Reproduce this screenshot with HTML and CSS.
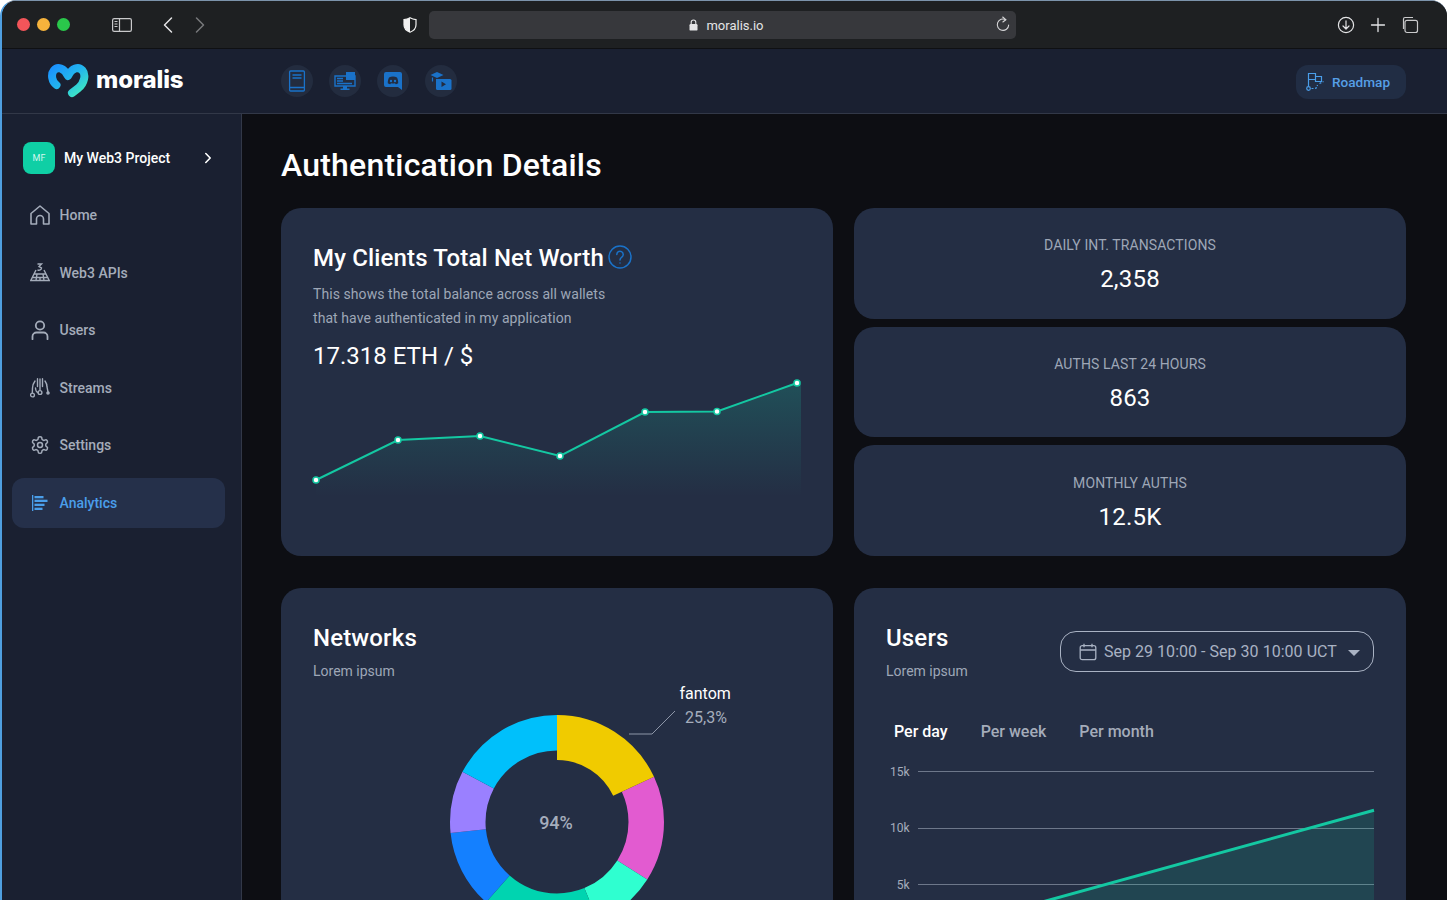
FILE: index.html
```html
<!DOCTYPE html>
<html lang="en">

<head>
    <meta charset="UTF-8">
    <title>Moralis - Authentication Details</title>
    <link rel="stylesheet" href="styles.css">
</head>

<body>
    <div class="window">
        <!-- Safari toolbar -->
        <div class="browser-bar">
            <div class="traffic">
                <span class="light red"></span>
                <span class="light yellow"></span>
                <span class="light green"></span>
            </div>
            <svg class="tool-sidebar" width="22" height="16" viewBox="0 0 22 16" fill="none" stroke="#c9c9cb" stroke-width="1.2">
                <rect x="1.6" y="1.6" width="18.8" height="12.8" rx="1.6" />
                <path d="M8.5 1.6v12.8" />
                <path d="M3.5 4.5h3M3.5 7h3M3.5 9.5h3" stroke-width="1" />
            </svg>
            <svg class="tool-back" width="12" height="18" viewBox="0 0 12 18" fill="none" stroke="#e4e4e6" stroke-width="1.5" stroke-linecap="round" stroke-linejoin="round">
                <path d="M9.5 2 2.5 9l7 7" />
            </svg>
            <svg class="tool-forward" width="12" height="18" viewBox="0 0 12 18" fill="none" stroke="#77787b" stroke-width="1.5" stroke-linecap="round" stroke-linejoin="round">
                <path d="M2.5 2l7 7-7 7" />
            </svg>
            <svg class="tool-shield" width="14" height="16" viewBox="0 0 14 16">
                <path d="M7 .8C5 2 3 2.5 1 2.6v5.2c0 3.4 2.6 6.2 6 7.4 3.4-1.2 6-4 6-7.4V2.600C11 2.500 9 2 7 .8z" fill="none" stroke="#f1f1f1" stroke-width="1.2" />
                <path d="M7 .8C5 2 3 2.5 1 2.6v5.2c0 3.4 2.6 6.2 6 7.4z" fill="#f1f1f1" />
            </svg>
            <div class="url-bar">
                <div class="url-text">
                    <svg width="9" height="12" viewBox="0 0 9 12">
                        <path d="M2.2 5.500V3.300a2.300 2.300 0 0 1 4.600 0v2.200" fill="none" stroke="#e4e4e6" stroke-width="1.1" />
                        <rect x=".5" y="5" width="8" height="6.6" rx="1.2" fill="#e4e4e6" />
                    </svg>
                    moralis.io
                </div>
                <svg class="reload" width="16" height="17" viewBox="0 0 16 17" fill="none" stroke="#d6d6d8" stroke-width="1.1" stroke-linecap="round" stroke-linejoin="round">
                    <path d="M10.8 3.7A5.7 5.7 0 1 0 13.7 9" />
                    <path d="M7.7 1 10.800 3.700 7.900 6" />
                </svg>
            </div>
            <div class="browser-actions">
                <svg width="18" height="18" viewBox="0 0 18 18" fill="none" stroke="#e4e4e6" stroke-width="1.2" stroke-linecap="round" stroke-linejoin="round">
                    <circle cx="9" cy="9" r="7.6" />
                    <path d="M9 4.800v8M6 10l3 3 3-3" />
                </svg>
                <svg width="18" height="18" viewBox="0 0 18 18" fill="none" stroke="#e4e4e6" stroke-width="1.3" stroke-linecap="round">
                    <path d="M9 2.500v13M2.500 9h13" />
                </svg>
                <svg width="18" height="18" viewBox="0 0 18 18" fill="none" stroke="#c9c9cb" stroke-width="1.2">
                    <path d="M2.500 13V3A1.500 1.500 0 0 1 4 1.500h8" />
                    <rect x="4" y="4.300" width="12.500" height="12.200" rx="2" />
                </svg>
            </div>
        </div>

        <!-- App header -->
        <div class="app-header">
            <div class="brand">
                <svg width="42" height="36" viewBox="0 0 42 36" fill="none">
                    <defs>
                        <linearGradient id="logoGrad" x1="0" y1="0" x2="1" y2="1">
                            <stop offset="0" stop-color="#1b93ff" />
                            <stop offset=".45" stop-color="#22b4ee" />
                            <stop offset="1" stop-color="#41ecc0" />
                        </linearGradient>
                    </defs>
                    <path d="M9.500 23C5 20 3.600 12.500 6.800 8.500 10.500 4 17 6 21 14 25 6 31.500 4 35.500 8.500 39 12.500 37.500 21 31.500 26L25 31" stroke="url(#logoGrad)" stroke-width="8" stroke-linecap="round" stroke-linejoin="round" />
                </svg>
                <span class="brand-name">moralis</span>
            </div>
            <div class="header-links">
                <span class="round-link">
                    <svg width="18" height="22" viewBox="0 0 18 22" fill="none" stroke="#1a72c9" stroke-width="1.3">
                        <rect x="1.600" y="1" width="14.800" height="20" rx="1" />
                        <path d="M1.600 17.500h14.800M4.500 5h9M4.500 8h9" />
                    </svg>
                </span>
                <span class="round-link">
                    <svg width="22" height="20" viewBox="0 0 22 20">
                        <path d="M1 5h20v10H1z" fill="none" stroke="#1a72c9" stroke-width="1.4" />
                        <path d="M12 1h9v8h-9z" fill="#1a72c9" />
                        <path d="M3 7.500h6M3 10h6M3 12.500h15" stroke="#1a72c9" stroke-width="1.3" />
                        <path d="M9 15h4v2.500h2.500V19h-9v-1.500H9z" fill="#1a72c9" />
                    </svg>
                </span>
                <span class="round-link">
                    <svg width="20" height="20" viewBox="0 0 20 20">
                        <path d="M3 1h14a2 2 0 0 1 2 2v16l-4-3H3a2 2 0 0 1-2-2V3a2 2 0 0 1 2-2z" fill="#1a72c9" />
                        <path d="M6 6.500c2.500-1.200 5.500-1.200 8 0 1 2 1.300 3.800 1.200 5.700-1 .7-1.800 1-2.500 1l-.7-1c-1.300.4-2.700.4-4 0l-.7 1c-.7 0-1.500-.3-2.500-1C4.700 10.300 5 8.500 6 6.500z" fill="#232c3f" />
                        <circle cx="8" cy="10" r="1.2" fill="#1a72c9" />
                        <circle cx="12" cy="10" r="1.2" fill="#1a72c9" />
                    </svg>
                </span>
                <span class="round-link">
                    <svg width="22" height="20" viewBox="0 0 22 20">
                        <path d="M7 1 13.500 4 7 7 .5 4z" fill="#1a72c9" />
                        <path d="M2.500 6.500v4" stroke="#1a72c9" stroke-width="1.2" />
                        <path d="M6 8h14a1.500 1.500 0 0 1 1.500 1.500v8A1.500 1.500 0 0 1 20 19H7.500A1.500 1.500 0 0 1 6 17.500z" fill="#1a72c9" />
                        <path d="M11.500 10.500v5.500l4.500-2.700z" fill="#232c3f" />
                    </svg>
                </span>
            </div>
            <div class="roadmap">
                <svg width="20" height="20" viewBox="0 0 20 20" fill="none" stroke="#4a9eea" stroke-width="1.2">
                    <path d="M2.500 14V1.500h7v3h6v5h-6v-2h-7M9.500 4.500v3" />
                    <circle cx="2.500" cy="16.500" r="1.800" />
                    <path d="M5.500 16.500h3c2 0 2.500-1.500 3-3.500M13.500 11.500l4-2" stroke-dasharray="2 1.500" />
                </svg>
                Roadmap
            </div>
        </div>

        <div class="app-body">
            <!-- Sidebar -->
            <div class="sidebar">
                <div class="project">
                    <span class="avatar">MF</span>
                    <span class="project-name">My Web3 Project</span>
                    <svg width="8" height="12" viewBox="0 0 8 12" fill="none" stroke="#fff" stroke-width="1.6" stroke-linecap="round" stroke-linejoin="round">
                        <path d="M1.800 1.500 6.200 6l-4.400 4.500" />
                    </svg>
                </div>
                <div class="nav">
                    <div class="nav-item">
                        <svg width="20" height="20" viewBox="0 0 20 20" fill="none" stroke="currentColor" stroke-width="1.6" stroke-linejoin="round">
                            <path d="M1 8.500 10 1l9 7.500V19h-5.500v-5a3.500 3.500 0 0 0-7 0v5H1z" />
                        </svg>
                        Home
                    </div>
                    <div class="nav-item">
                        <svg width="20" height="20" viewBox="0 0 20 20" fill="none" stroke="currentColor" stroke-width="1.4">
                            <path d="M7.500 1h4L9 3.500l2.500 1.500c0 2-2 2.500-4 2" />
                            <path d="M6 7 .8 17.500h18.400L14 7M4.500 11h11M2.500 14.500h15M7 11l-1 6.500M13 11l1 6.500M10 14.500v3" />
                        </svg>
                        Web3 APIs
                    </div>
                    <div class="nav-item">
                        <svg width="20" height="20" viewBox="0 0 20 20" fill="none" stroke="currentColor" stroke-width="1.8" stroke-linecap="round">
                            <circle cx="10" cy="5.500" r="4.200" />
                            <path d="M2.500 19.200v-2.700c0-2.500 2-4 4-4h7c2 0 4 1.500 4 4v2.700" />
                        </svg>
                        Users
                    </div>
                    <div class="nav-item">
                        <svg width="20" height="20" viewBox="0 0 20 20" fill="none" stroke="currentColor" stroke-width="1.4" stroke-linecap="round">
                            <path d="M7.500.8v7.700M12.500.8v7.700M10 1v11M5 3C3.500 5 2.500 7 2.500 10l-.2 5M15 3c1.500 2 2 4 2 6l1 5" />
                            <circle cx="2.500" cy="17" r="1.900" />
                            <circle cx="10" cy="14.500" r="1.900" />
                            <circle cx="18" cy="15" r="1.100" fill="currentColor" />
                            <path d="M5.500 10c.2 2.500 1.200 4.500 2.700 4.500" />
                        </svg>
                        Streams
                    </div>
                    <div class="nav-item">
                        <svg width="20" height="20" viewBox="0 0 24 24" fill="none" stroke="currentColor" stroke-width="1.8" stroke-linejoin="round">
                            <path d="M12.220 2h-.44a2 2 0 0 0-2 2v.18a2 2 0 0 1-1 1.730l-.43.250a2 2 0 0 1-2 0l-.15-.08a2 2 0 0 0-2.730.730l-.22.380a2 2 0 0 0 .730 2.730l.15.100a2 2 0 0 1 1 1.720v.510a2 2 0 0 1-1 1.740l-.15.090a2 2 0 0 0-.730 2.730l.22.380a2 2 0 0 0 2.730.730l.15-.08a2 2 0 0 1 2 0l.43.250a2 2 0 0 1 1 1.730V20a2 2 0 0 0 2 2h.44a2 2 0 0 0 2-2v-.18a2 2 0 0 1 1-1.730l.43-.250a2 2 0 0 1 2 0l.15.08a2 2 0 0 0 2.730-.730l.22-.390a2 2 0 0 0-.730-2.730l-.15-.08a2 2 0 0 1-1-1.740v-.5a2 2 0 0 1 1-1.740l.15-.090a2 2 0 0 0 .730-2.730l-.22-.380a2 2 0 0 0-2.730-.730l-.15.08a2 2 0 0 1-2 0l-.43-.250a2 2 0 0 1-1-1.730V4a2 2 0 0 0-2-2z" />
                            <circle cx="12" cy="12" r="3" />
                        </svg>
                        Settings
                    </div>
                    <div class="nav-item active">
                        <svg width="20" height="20" viewBox="0 0 20 20" fill="currentColor">
                            <rect x="2" y="2" width="1.300" height="16" />
                            <rect x="4.500" y="3" width="9" height="2.300" />
                            <rect x="4.500" y="6.700" width="13" height="2.300" />
                            <rect x="4.500" y="10.700" width="10" height="2.300" />
                            <rect x="4.500" y="14.700" width="8" height="2.300" />
                        </svg>
                        Analytics
                    </div>
                </div>
            </div>

            <!-- Main content -->
            <div class="main">
                <h1>Authentication Details</h1>
                <div class="grid">
                    <div class="card worth">
                        <h2>My Clients Total Net Worth
                            <svg class="help" width="24" height="24" viewBox="0 0 24 24" fill="none" stroke="#1a72c9" stroke-width="1.5" stroke-linecap="round">
                                <circle cx="12" cy="12" r="11" />
                                <path d="M8.800 9.500a3.200 3.200 0 1 1 5 2.600c-1.100.8-1.800 1.400-1.800 2.900" />
                                <path d="M12 18v.1" />
                            </svg>
                        </h2>
                        <p class="desc">This shows the total balance across all wallets<br>that have authenticated in my application</p>
                        <div class="balance">17.318 ETH / $</div>
                        <svg class="spark" width="488" height="130" viewBox="0 0 488 130">
                            <defs>
                                <linearGradient id="sparkFill" x1="0" y1="0" x2="0" y2="1">
                                    <stop offset="0" stop-color="#14c8a2" stop-opacity=".22" />
                                    <stop offset="1" stop-color="#14c8a2" stop-opacity="0" />
                                </linearGradient>
                            </defs>
                            <path d="M3 108 85 68 167 64 247 84 332 40 404 39.500 484 11 488 9V124H3z" fill="url(#sparkFill)" />
                            <path d="M3 108 85 68 167 64 247 84 332 40 404 39.500 484 11" fill="none" stroke="#14c8a2" stroke-width="2" />
                            <g fill="#fff" stroke="#14c8a2" stroke-width="1.500">
                                <circle cx="3" cy="108" r="3" />
                                <circle cx="85" cy="68" r="3" />
                                <circle cx="167" cy="64" r="3" />
                                <circle cx="247" cy="84" r="3" />
                                <circle cx="332" cy="40" r="3" />
                                <circle cx="404" cy="39.500" r="3" />
                                <circle cx="484" cy="11" r="3" />
                            </g>
                        </svg>
                    </div>

                    <div class="stats">
                        <div class="card stat">
                            <div class="stat-label">DAILY INT. TRANSACTIONS</div>
                            <div class="stat-value">2,358</div>
                        </div>
                        <div class="card stat">
                            <div class="stat-label">AUTHS LAST 24 HOURS</div>
                            <div class="stat-value">863</div>
                        </div>
                        <div class="card stat">
                            <div class="stat-label">MONTHLY AUTHS</div>
                            <div class="stat-value">12.5K</div>
                        </div>
                    </div>

                    <div class="card tall">
                        <h2>Networks</h2>
                        <p class="sub">Lorem ipsum</p>
                        <svg class="donut" width="488" height="300" viewBox="0 0 488 300" fill="none">
                            <g transform="rotate(-90 244 139)" stroke-width="35.500">
                                <circle cx="244" cy="139" r="89.250" pathLength="360" stroke="#e25bd0" stroke-dasharray="57.500 302.500" stroke-dashoffset="-65" />
                                <circle cx="244" cy="139" r="89.250" pathLength="360" stroke="#2fffd0" stroke-dasharray="35 325" stroke-dashoffset="-122.500" />
                                <circle cx="244" cy="139" r="89.250" pathLength="360" stroke="#00d4b0" stroke-dasharray="64 296" stroke-dashoffset="-157.500" />
                                <circle cx="244" cy="139" r="89.250" pathLength="360" stroke="#1480ff" stroke-dasharray="42.500 317.500" stroke-dashoffset="-221.500" />
                                <circle cx="244" cy="139" r="89.250" pathLength="360" stroke="#9a80ff" stroke-dasharray="34 326" stroke-dashoffset="-264" />
                                <circle cx="244" cy="139" r="89.250" pathLength="360" stroke="#00c0fb" stroke-dasharray="62 298" stroke-dashoffset="-298" />
                                <circle cx="244" cy="139" r="84.500" pathLength="360" stroke="#f0cb00" stroke-width="45" stroke-dasharray="65 295" />
                            </g>
                            <path d="M316 51h23l23-23" stroke="#8d96a8" />
                            <text x="366.500" y="15.500" class="donut-name">fantom</text>
                            <text x="372" y="40" class="donut-pct">25,3%</text>
                            <text x="243" y="146" class="donut-center">94%</text>
                        </svg>
                    </div>

                    <div class="card tall">
                        <div class="users-head">
                            <div>
                                <h2>Users</h2>
                                <p class="sub">Lorem ipsum</p>
                            </div>
                            <div class="date-picker">
                                <svg width="18" height="18" viewBox="0 0 18 18" fill="none" stroke="#a9b2c3" stroke-width="1.3">
                                    <rect x="1.200" y="2.700" width="15.600" height="14" rx="2" />
                                    <path d="M1.200 7h15.600M5 .8v3.500M13 .8v3.500" />
                                </svg>
                                Sep 29 10:00 - Sep 30 10:00 UCT
                                <span class="caret"></span>
                            </div>
                        </div>
                        <div class="tabs">
                            <span class="tab current">Per day</span>
                            <span class="tab">Per week</span>
                            <span class="tab">Per month</span>
                        </div>
                        <svg class="users-chart" width="488" height="180" viewBox="0 0 488 180">
                            <g stroke="#6d778a" stroke-width="1">
                                <path d="M32 11.500H488" />
                                <path d="M32 68.500H488" />
                                <path d="M32 124.500H488" />
                            </g>
                            <g class="axis">
                                <text x="23.500" y="15.500">15k</text>
                                <text x="23.500" y="72">10k</text>
                                <text x="23.500" y="128.500">5k</text>
                            </g>
                            <path d="M120 152 488 50.300V180H120z" fill="#14c8a2" opacity=".15" />
                            <path d="M120 152 488 50.300" stroke="#14c8a2" stroke-width="3" fill="none" />
                        </svg>
                    </div>
                </div>
            </div>
        </div>
    </div>
</body>

</html>
```

FILE: styles.css
```css
* {
    box-sizing: border-box;
}

html,
body {
    margin: 0;
    height: 900px;
    overflow: hidden;
    background: #fff;
}

body {
    font-family: Roboto, 'Liberation Sans', sans-serif;
    color: #fff;
}

.window {
    width: 1447px;
    height: 900px;
    display: flex;
    flex-direction: column;
    overflow: hidden;
    background: #0d0e13;
    border-top: 1px solid #7c93ab;
    border-left: 2px solid #4f9fe0;
    border-radius: 16px 16px 0 0;
}

/* browser toolbar */
.browser-bar {
    height: 48px;
    flex: none;
    display: flex;
    align-items: center;
    background: #1e2022;
    border-bottom: 1px solid #0f1013;
}

.traffic {
    display: flex;
    gap: 7px;
    margin-left: 15px;
}

.light {
    width: 13px;
    height: 13px;
    border-radius: 50%;
}

.red { background: #f3555a; }
.yellow { background: #f6b33c; }
.green { background: #2ac84b; }

.tool-sidebar {
    margin-left: 41px;
}

.tool-back {
    margin-left: 29px;
}

.tool-forward {
    margin-left: 20px;
}

.tool-shield {
    margin-left: 197px;
}

.url-bar {
    width: 587px;
    height: 28px;
    margin-left: 12px;
    padding: 0 5px;
    display: flex;
    align-items: center;
    background: #37383c;
    border-radius: 5px;
}

.url-text {
    flex: 1;
    padding: 1px 0 0 24px;
    display: flex;
    justify-content: center;
    align-items: center;
    gap: 8px;
    font-size: 13px;
    color: #e4e4e6;
}

.browser-actions {
    margin-left: 321px;
    display: flex;
    gap: 14px;
}

/* app header */
.app-header {
    height: 65px;
    flex: none;
    display: flex;
    align-items: center;
    padding-right: 41px;
    background: #1a2031;
    border-bottom: 1px solid #323848;
}

.brand {
    width: 279px;
    padding: 0 0 3px 45px;
    display: flex;
    align-items: center;
    gap: 7px;
}

.brand-name {
    font-family: Inter, sans-serif;
    font-size: 24px;
    font-weight: 800;
    letter-spacing: -.1px;
}

.header-links {
    display: flex;
    gap: 16px;
}

.round-link {
    width: 32px;
    height: 32px;
    border-radius: 50%;
    background: #232c3f;
    display: flex;
    align-items: center;
    justify-content: center;
}

.roadmap {
    margin: 2px 0 0 auto;
    height: 34px;
    width: 110px;
    padding-left: 10px;
    display: flex;
    align-items: center;
    gap: 6px;
    font-size: 13.6px;
    font-weight: 500;
    color: #569fe6;
    background: #212d44;
    border-radius: 12px;
}

.app-body {
    flex: 1;
    display: flex;
    min-height: 0;
}

/* sidebar */
.sidebar {
    width: 240px;
    flex: none;
    padding-top: 28px;
    background: #1a2031;
    border-right: 1px solid #323848;
}

.project {
    height: 32px;
    margin-left: 21px;
    display: flex;
    align-items: center;
}

.avatar {
    width: 32px;
    height: 32px;
    border-radius: 8px;
    background: #0fcfa5;
    display: flex;
    align-items: center;
    justify-content: center;
    font-size: 9px;
    color: #d5f7ef;
}

.project-name {
    width: 140px;
    margin-left: 9px;
    font-size: 14px;
    font-weight: 500;
}

.nav {
    margin: 16px 0 0 10px;
    width: 213px;
    display: flex;
    flex-direction: column;
    gap: 7.6px;
}

.nav-item {
    height: 50px;
    padding-left: 17.5px;
    display: flex;
    align-items: center;
    gap: 10px;
    font-size: 14px;
    font-weight: 500;
    color: #a4acba;
    border-radius: 12px;
}

.nav-item svg {
    flex: none;
}

.nav-item.active {
    color: #4a9eea;
    background: #25304a;
}

/* main area */
.main {
    flex: 1;
    min-width: 0;
    padding: 30px 41px 0 39px;
    overflow: hidden;
}

h1 {
    margin: 0 0 22px;
    font-size: 32px;
    line-height: 42px;
    font-weight: 500;
    letter-spacing: .2px;
}

.grid {
    display: grid;
    grid-template-columns: 1fr 1fr;
    grid-template-rows: 348px auto;
    column-gap: 21px;
    row-gap: 32px;
}

.card {
    background: #242e44;
    border-radius: 20px;
    padding: 32px;
}

h2 {
    margin: 0;
    font-size: 24px;
    line-height: 36px;
    font-weight: 500;
    letter-spacing: .16px;
    display: flex;
    align-items: center;
    gap: 4px;
}

.help {
    margin-top: -2px;
}

.desc {
    margin: 6px 0 0;
    font-size: 14px;
    line-height: 24px;
    letter-spacing: .07px;
    color: #9ea7b7;
}

.balance {
    margin-top: 10px;
    font-size: 24px;
    line-height: 32px;
}

.spark,
.donut,
.users-chart {
    display: block;
    overflow: visible;
}

.stats {
    display: flex;
    flex-direction: column;
    gap: 8px;
}

.stat {
    flex: 1;
    padding: 4px 0 0;
    display: flex;
    flex-direction: column;
    align-items: center;
    justify-content: center;
    gap: 8px;
}

.stat-label {
    font-size: 14px;
    line-height: 20px;
    letter-spacing: .1px;
    color: #9ea7b7;
}

.stat-value {
    font-size: 24px;
    line-height: 32px;
    letter-spacing: .2px;
}

.tall {
    height: 500px;
}

.sub {
    margin: 3px 0 0;
    font-size: 14px;
    line-height: 24px;
    color: #9ea7b7;
}

.donut-name {
    font-size: 16px;
    fill: #fff;
}

.donut-pct {
    font-size: 16px;
    fill: #a5adbc;
}

.donut-center {
    font-size: 18px;
    font-weight: 500;
    fill: #a5adbc;
    text-anchor: middle;
}

.users-head {
    display: flex;
    justify-content: space-between;
    height: 63px;
}

.date-picker {
    width: 314px;
    height: 41px;
    margin-top: 11px;
    padding-left: 18px;
    display: flex;
    align-items: center;
    gap: 7px;
    font-size: 16px;
    letter-spacing: .03px;
    color: #a9b2c3;
    border: 1px solid #a9b2c3;
    border-radius: 16px;
}

.caret {
    margin: 3px 0 0 4px;
    border-left: 6px solid transparent;
    border-right: 6px solid transparent;
    border-top: 6px solid #a9b2c3;
}

.tabs {
    margin-top: 37px;
    padding-left: 8px;
    display: flex;
    gap: 33px;
}

.tab {
    font-size: 16px;
    line-height: 24px;
    font-weight: 500;
    color: #a4acba;
}

.tab.current {
    color: #fff;
}

.users-chart {
    margin-top: 16px;
}

.axis text {
    font-size: 12px;
    fill: #a5adbc;
    text-anchor: end;
}
```
